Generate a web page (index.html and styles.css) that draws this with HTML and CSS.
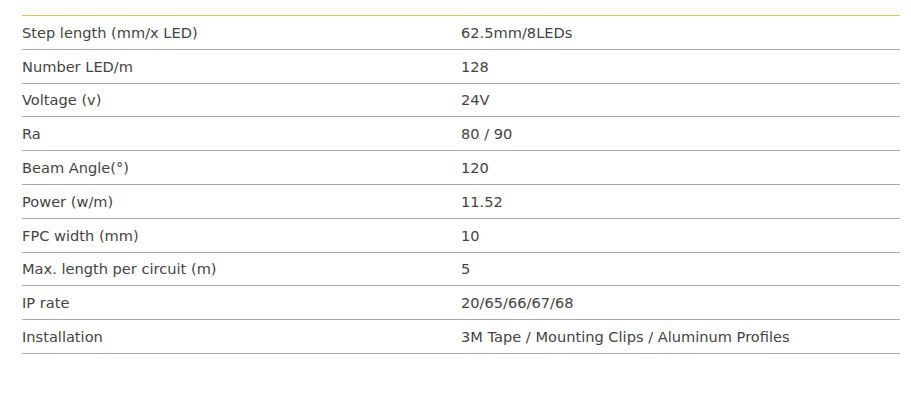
FILE: index.html
```html
<!DOCTYPE html>
<html>
<head>
<meta charset="utf-8">
<link rel="stylesheet" href="styles.css">
</head>
<body>
<div class="spec">
  <div class="row"><div class="cell">Step length (mm/x LED)</div><div class="cell">62.5mm/8LEDs</div></div>
  <div class="row"><div class="cell">Number LED/m</div><div class="cell">128</div></div>
  <div class="row"><div class="cell">Voltage (v)</div><div class="cell">24V</div></div>
  <div class="row"><div class="cell">Ra</div><div class="cell">80 / 90</div></div>
  <div class="row"><div class="cell">Beam Angle(°)</div><div class="cell">120</div></div>
  <div class="row"><div class="cell">Power (w/m)</div><div class="cell">11.52</div></div>
  <div class="row"><div class="cell">FPC width (mm)</div><div class="cell">10</div></div>
  <div class="row"><div class="cell">Max. length per circuit (m)</div><div class="cell">5</div></div>
  <div class="row"><div class="cell">IP rate</div><div class="cell">20/65/66/67/68</div></div>
  <div class="row"><div class="cell">Installation</div><div class="cell">3M Tape / Mounting Clips / Aluminum Profiles</div></div>
</div>
</body>
</html>
```
FILE: styles.css
```css
html, body {
  margin: 0;
  padding: 0;
  background: #fff;
}
body {
  padding: 15px 11px 0 22px;
  font-family: "DejaVu Sans", sans-serif;
  font-size: 14.6px;
  color: #444;
}
.spec {
  border-top: 1px solid #e6c64a;
}
.row {
  display: grid;
  grid-template-columns: 439px 1fr;
  height: 32.8px;
  align-items: center;
  border-bottom: 1px solid #aaa;
}
.cell {
  white-space: nowrap;
}
```
